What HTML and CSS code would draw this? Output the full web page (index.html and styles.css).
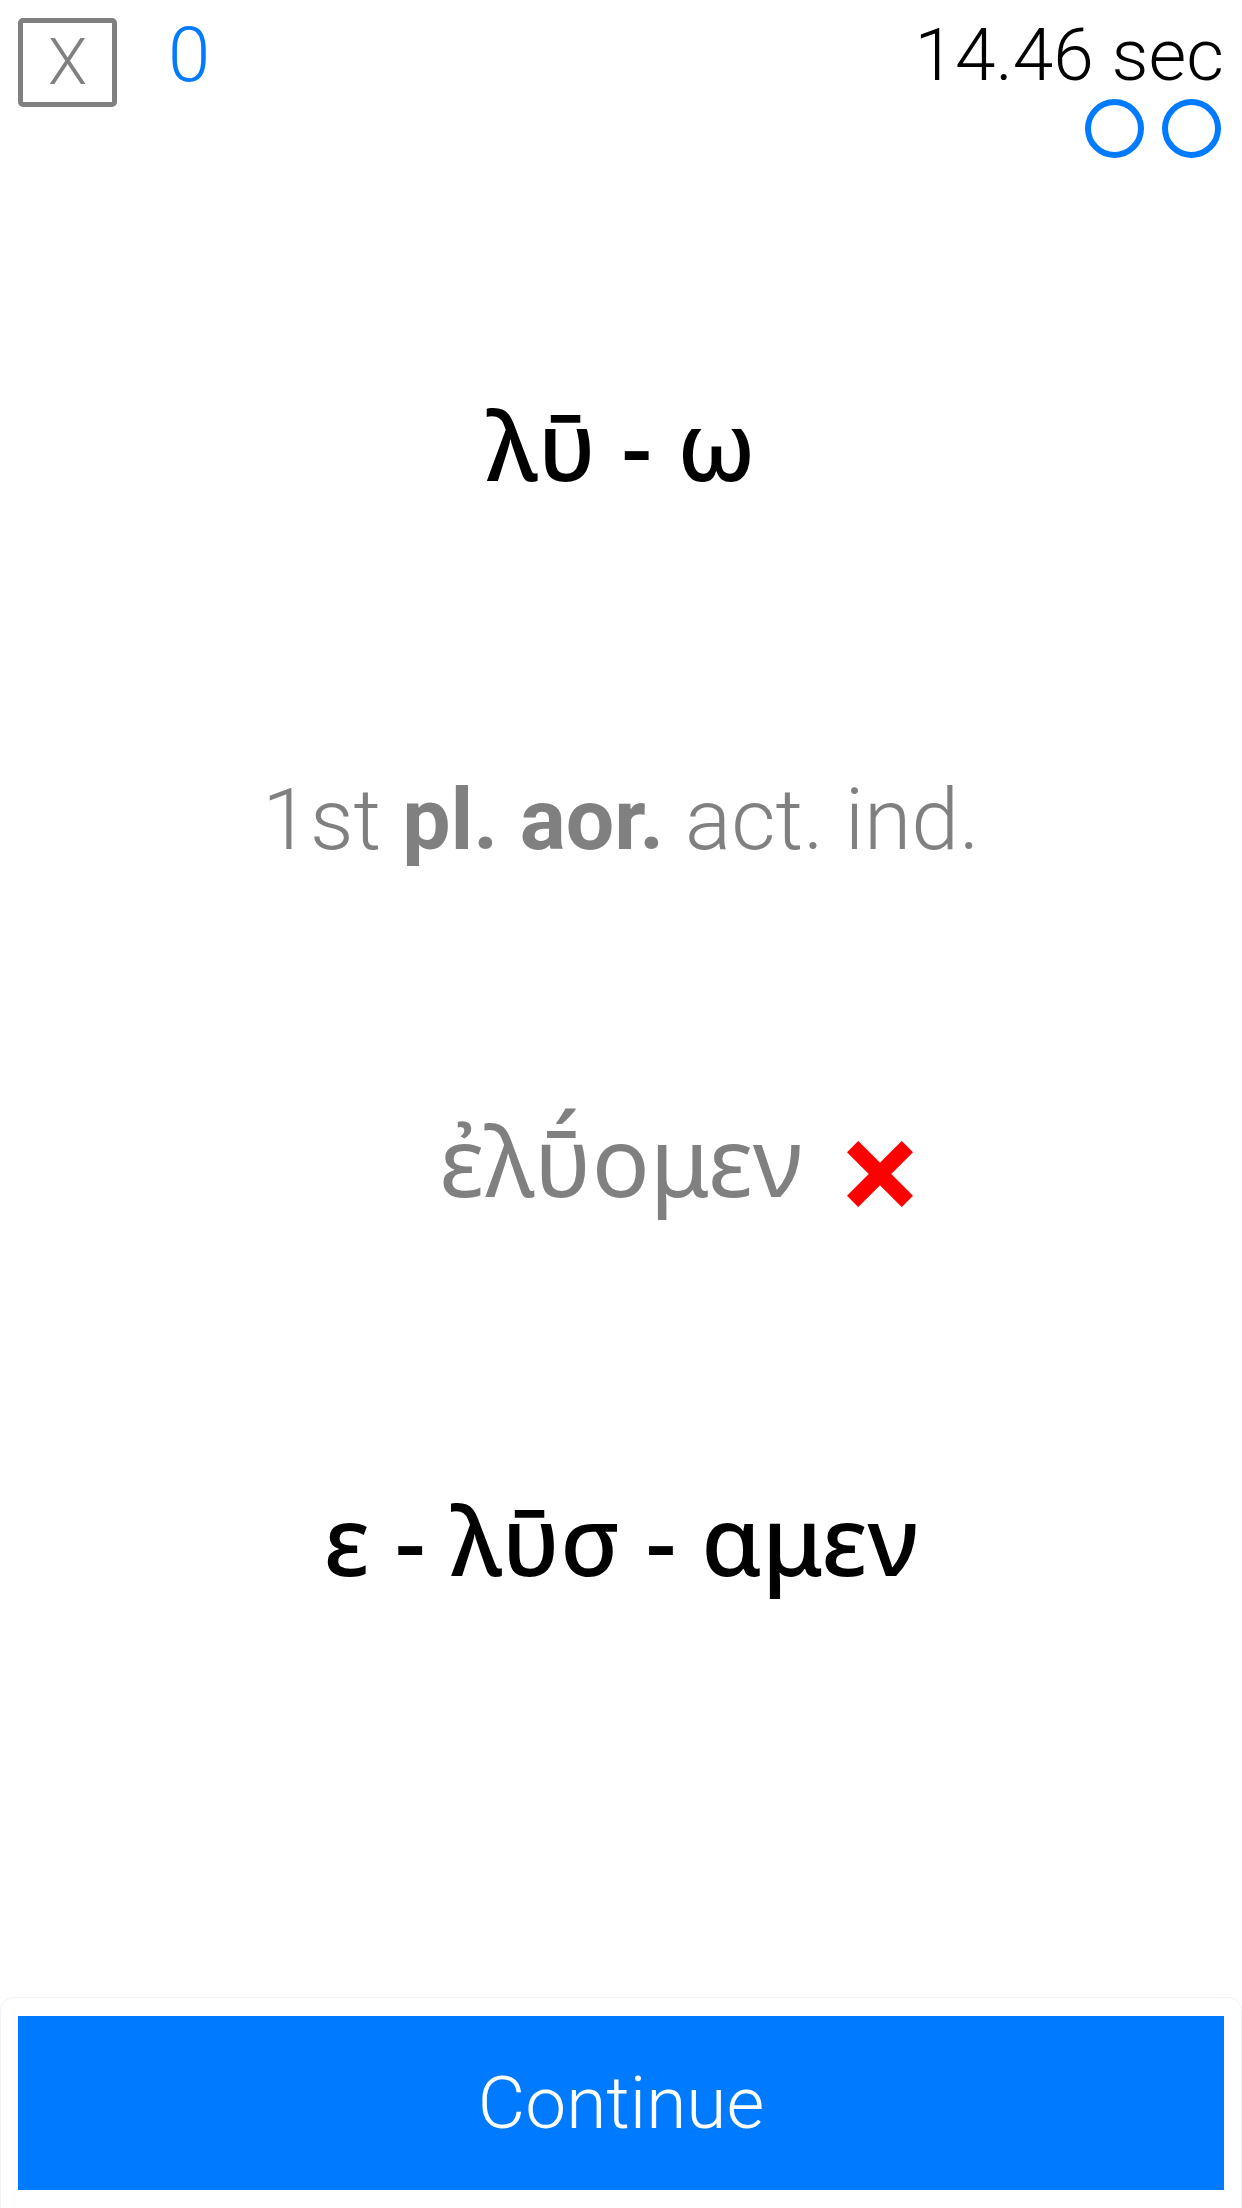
FILE: index.html
```html
<!DOCTYPE html>
<html lang="en">
<head>
<meta charset="utf-8">
<title>Drill</title>
<link rel="stylesheet" href="styles.css">
</head>
<body>
<div class="screen">
  <header class="topbar">
    <div class="left">
      <div class="close-box">X</div>
      <div class="score">0</div>
    </div>
    <div class="right">
      <div class="timer">14.46 sec</div>
      <div class="lives">
        <span class="ring"></span>
        <span class="ring"></span>
      </div>
    </div>
  </header>

  <main class="content">
    <div class="prompt greek">λῡ - ω</div>
    <div class="desc">1st <b>pl. aor.</b> act. ind.</div>
    <div class="answer greek">
      <span class="answer-word">ἐλῡ́ομεν<svg class="wrong" viewBox="0 0 66 66" width="66" height="66"><path d="M5.6 5.6 L60.4 60.4 M60.4 5.6 L5.6 60.4" stroke="#ff0000" stroke-width="16" fill="none"/></svg></span>
    </div>
    <div class="correct greek">ε - λῡσ - αμεν</div>
  </main>

  <footer class="footer">
    <div class="continue">Continue</div>
  </footer>
</div>
</body>
</html>
```

FILE: styles.css
```css
html, body {
  margin: 0;
  padding: 0;
  background: #ffffff;
}

.screen {
  width: 1242px;
  height: 2208px;
  display: flex;
  flex-direction: column;
  overflow: hidden;
  font-family: "Roboto", "Liberation Sans", sans-serif;
}

.topbar {
  height: 160px;
  box-sizing: border-box;
  padding: 18px 18px 0 18px;
  display: flex;
  justify-content: space-between;
  align-items: flex-start;
}

.left {
  display: flex;
  align-items: flex-start;
}

.close-box {
  width: 99px;
  height: 89px;
  box-sizing: border-box;
  border: 5px solid #808080;
  border-radius: 5px;
  display: flex;
  align-items: center;
  justify-content: center;
  color: #808080;
  font-weight: 300;
  font-size: 64px;
  line-height: 1;
}

.score {
  margin-left: 51px;
  color: #007aff;
  font-weight: 300;
  font-size: 76px;
  line-height: 74px;
}

.right {
  display: flex;
  flex-direction: column;
  align-items: flex-end;
}

.timer {
  color: #000000;
  font-weight: 300;
  font-size: 73px;
  line-height: 74px;
}

.lives {
  display: flex;
  gap: 18px;
  margin-top: 7px;
  margin-right: 3px;
}

.ring {
  width: 59px;
  height: 59px;
  box-sizing: border-box;
  border: 6px solid #007aff;
  border-radius: 50%;
}

.content {
  display: flex;
  flex-direction: column;
  align-items: center;
}

.greek {
  font-family: "Noto Sans", "DejaVu Sans", sans-serif;
  font-size: 96px;
  line-height: 120px;
  height: 120px;
  text-align: center;
  white-space: nowrap;
}

.prompt {
  margin-top: 224px;
  color: #000000;
  font-weight: 500;
}

.desc {
  margin-top: 266px;
  height: 100px;
  line-height: 100px;
  font-size: 86px;
  font-weight: 300;
  color: #808080;
  white-space: nowrap;
}

.desc b {
  font-weight: 700;
}

.answer {
  margin-top: 230px;
  color: #808080;
  font-weight: 400;
}

.answer-word {
  position: relative;
  display: inline-block;
}

.wrong {
  position: absolute;
  left: calc(100% + 44px);
  top: 41px;
}

.correct {
  margin-top: 259px;
  color: #000000;
  font-weight: 500;
}

.footer {
  margin-top: auto;
  height: 211px;
  box-sizing: border-box;
  border: 1px solid #eef3fb;
  border-bottom: none;
  border-radius: 14px 14px 0 0;
  padding: 18px 17px 0 17px;
}

.continue {
  height: 174px;
  background: #007aff;
  color: #ffffff;
  display: flex;
  align-items: center;
  justify-content: center;
  font-weight: 300;
  font-size: 73px;
}
```
